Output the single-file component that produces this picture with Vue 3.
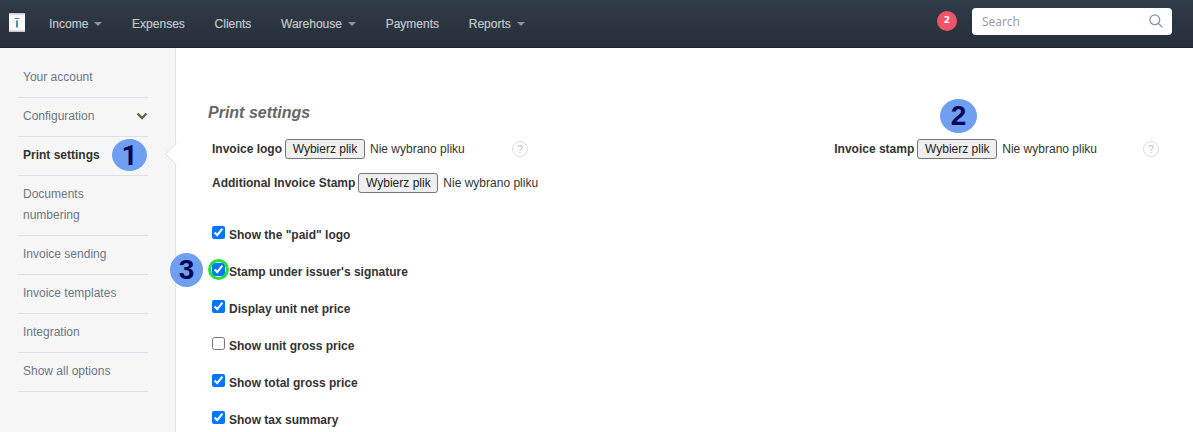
<script setup>
const nav = [
  { label: 'Income', caret: true },
  { label: 'Expenses' },
  { label: 'Clients' },
  { label: 'Warehouse', caret: true },
  { label: 'Payments' },
  { label: 'Reports', caret: true },
]
const side = [
  { label: 'Your account' },
  { label: 'Configuration', chevron: true },
  { label: 'Print settings', active: true },
  { label: 'Documents numbering', tall: true },
  { label: 'Invoice sending' },
  { label: 'Invoice templates' },
  { label: 'Integration' },
  { label: 'Show all options' },
]
const checks = [
  { label: 'Show the "paid" logo', on: true },
  { label: "Stamp under issuer's signature", on: true, ring: true },
  { label: 'Display unit net price', on: true },
  { label: 'Show unit gross price', on: false },
  { label: 'Show total gross price', on: true },
  { label: 'Show tax summary', on: true },
]
</script>

<template>
  <div class="page">
    <header class="top">
      <svg class="logo" width="16" height="19" viewBox="0 0 16 19">
        <rect width="16" height="19" fill="#f7f8fa" />
        <path d="M0 .8h16M0 18.2h16" stroke="#f2b6c6" stroke-width="1.6" stroke-dasharray="2 2" />
        <path d="M0 .8h16M0 18.2h16" stroke="#a9d6ea" stroke-width="1.6" stroke-dasharray="2 2" stroke-dashoffset="2" />
        <path d="M5.5 5.5h5" stroke="#5b87a8" stroke-width="1" />
        <path d="M8 7.5v7" stroke="#2f6a94" stroke-width="1.6" />
      </svg>
      <nav class="nav">
        <a v-for="n in nav" :key="n.label" class="nav-item">{{ n.label }}<i v-if="n.caret" class="caret"></i></a>
      </nav>
      <div class="top-right">
        <span class="badge">2</span>
        <div class="search">
          <span>Search</span>
          <svg width="14" height="14" viewBox="0 0 14 14" fill="none" stroke="#7d93ad" stroke-width="1.3"><circle cx="5.8" cy="5.8" r="4.9"/><path d="M9.3 9.3 13.4 13.4"/></svg>
        </div>
      </div>
    </header>
    <div class="body">
      <aside class="side">
        <div v-for="s in side" :key="s.label" class="side-item" :class="{ active: s.active, tall: s.tall }">
          <span>{{ s.label }}</span>
          <svg v-if="s.chevron" class="chev" width="12" height="8" viewBox="0 0 12 8" fill="none" stroke="#6b5a45" stroke-width="2.4"><path d="M1.5 1.5 6 6l4.5-4.5"/></svg>
        </div>
        <i class="notch"></i>
        <b class="num n1">1</b>
      </aside>
      <main class="main">
        <h2 class="title">Print settings</h2>
        <div class="file-row first">
          <div class="file-cell">
            <label class="lab">Invoice logo</label>
            <button class="btn">Wybierz plik</button>
            <span class="none">Nie wybrano pliku</span>
            <span class="help h1">?</span>
          </div>
          <div class="file-cell right">
            <label class="lab">Invoice stamp</label>
            <button class="btn">Wybierz plik</button>
            <span class="none">Nie wybrano pliku</span>
            <span class="help h2">?</span>
          </div>
        </div>
        <div class="file-row second">
          <div class="file-cell">
            <label class="lab">Additional Invoice Stamp</label>
            <button class="btn">Wybierz plik</button>
            <span class="none">Nie wybrano pliku</span>
          </div>
        </div>
        <div class="checks">
          <label v-for="c in checks" :key="c.label" class="check">
            <span class="box" :class="{ ring: c.ring }"><input type="checkbox" :checked="c.on" /></span>
            <span class="lab">{{ c.label }}</span>
          </label>
        </div>
        <b class="num n2">2</b>
        <b class="num n3">3</b>
      </main>
    </div>
  </div>
</template>

<style>
html, body { margin: 0; background: #fff; overflow: hidden; }
</style>

<style scoped>
.page { width: 1193px; height: 432px; overflow: hidden; font-family: "Liberation Sans", Arial, sans-serif; font-size: 12px; color: #333; }
.top { height: 47px; border-bottom: 1px solid #1c232b; background: linear-gradient(#2f3b47, #27303a); display: flex; align-items: center; }
.logo { margin-left: 9px; margin-bottom: 3px; flex: none; }
.nav { display: flex; margin-left: 24px; }
.nav-item { color: #c2c6cb; font-size: 12px; margin-right: 29.75px; display: flex; align-items: center; -webkit-text-stroke: 0.2px #c2c6cb; }
.caret { width: 0; height: 0; border: 4px solid transparent; border-top: 4px solid #8b929a; border-bottom: 0; margin-left: 6px; }
.top-right { margin-left: auto; display: flex; align-items: center; margin-right: 21px; margin-bottom: 5px; }
.badge { width: 20px; height: 20px; border-radius: 50%; background: #ef5468; color: #fff; font: 700 9px "DejaVu Sans", sans-serif; display: flex; align-items: center; justify-content: center; padding-bottom: 3px; box-sizing: border-box; margin-right: 15px; }
.search { width: 200px; height: 27px; box-sizing: border-box; border-radius: 4px; background: #fff; display: flex; align-items: center; justify-content: space-between; padding: 0 9px 0 10px; color: #9a9fa6; font: 12px "Noto Sans", sans-serif; }
.body { display: flex; height: 384px; }
.side { position: relative; width: 176px; box-sizing: border-box; background: #f6f6f7; border-right: 1px solid #dfe6ee; padding: 11px 27px 0 18px; flex: none; }
.side-item { height: 36px; padding: 0 0 2px 5px; border-bottom: 1px solid #dde1e6; display: flex; align-items: center; justify-content: space-between; color: #6b7685; line-height: 21px; }
.side-item.tall { height: 57px; padding-right: 40px; }
.side-item.active { color: #333; font-weight: 700; }
.notch { position: absolute; left: 168px; top: 97.5px; width: 16px; height: 16px; box-sizing: border-box; background: #fff; border-left: 1px solid #dfe6ee; border-bottom: 1px solid #dfe6ee; transform: rotate(45deg); }
.main { position: relative; flex: 1; padding: 0 32px; }
.title { margin: 56px 0 0; font-size: 16px; font-style: italic; font-weight: 700; color: #666; line-height: 18px; height: 18px; }
.file-row { display: flex; justify-content: space-between; padding-left: 4px; }
.first { margin-top: 17px; }
.second { margin-top: 14px; }
.file-cell { display: flex; align-items: center; height: 20px; position: relative; }
.file-cell.right { margin-right: 64px; }
.lab { font-weight: 700; font-size: 12px; color: #333; }
.btn { height: 20px; width: 80px; padding: 0; margin: 0 5px 0 3px; font: 12px "Liberation Sans", Arial, sans-serif; color: #222; background: #efefef; border: 1px solid #767676; border-radius: 3px; }
.none { color: #333; }
.help { position: absolute; width: 16px; height: 16px; box-sizing: border-box; border: 1px solid #ddd; border-radius: 50%; color: #bbb; font-size: 10px; display: flex; align-items: center; justify-content: center; }
.h1 { left: 300px; top: 2px; }
.h2 { right: -62px; top: 2px; }
.checks { margin-top: 34px; padding-left: 4px; display: flex; flex-direction: column; gap: 21px; }
.check { display: flex; align-items: center; height: 16px; }
.box { width: 13px; height: 13px; margin-right: 4px; position: relative; display: block; margin-top: -5px; }
.box input { margin: 0; width: 13px; height: 13px; display: block; accent-color: #0075ff; }
.box.ring::after { content: ""; position: absolute; left: -4px; top: -4px; width: 15px; height: 15px; border: 3px solid #22e03f; border-radius: 50%; }
.num { position: absolute; border-radius: 50%; background: #6f9ff0; color: #05055a; font: 700 28px "Liberation Sans", Arial, sans-serif; display: flex; align-items: center; justify-content: center; }
.n1 { left: 112px; top: 91px; width: 35px; height: 32px; font-family: Roboto, "Liberation Sans", sans-serif; }
.n2 { left: 764px; top: 51px; width: 37px; height: 34px; }
.n3 { left: -6px; top: 205px; width: 33px; height: 34px; }
</style>
